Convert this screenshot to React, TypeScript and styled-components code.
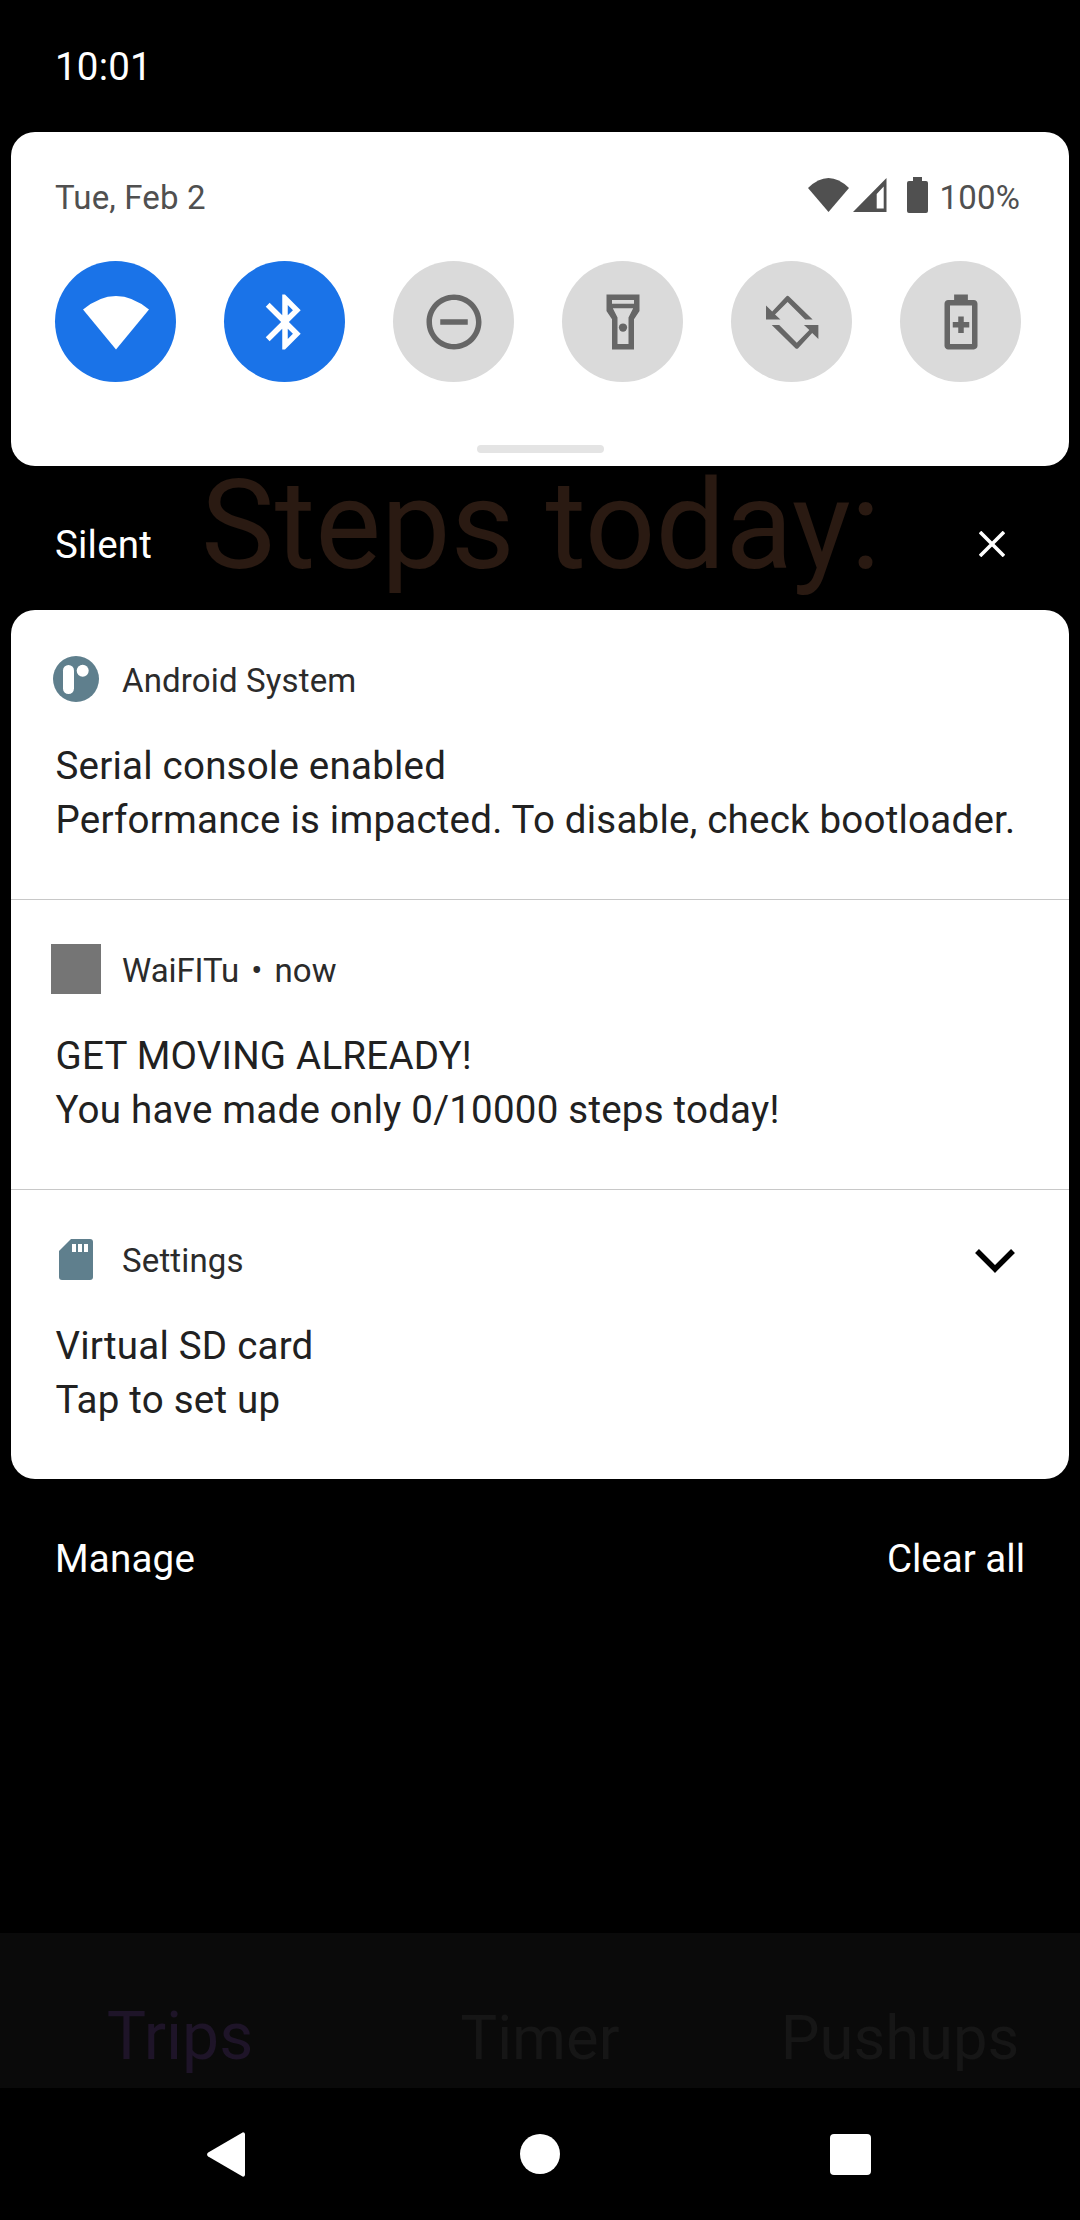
import React from "react";
import styled, { createGlobalStyle } from "styled-components";

const Global = createGlobalStyle`
  html, body { margin: 0; padding: 0; background: #000; }
  body { font-family: Roboto, "Liberation Sans", sans-serif; }
`;

const Screen = styled.div`
  width: 1080px;
  height: 2220px;
  background: #000;
  display: flex;
  flex-direction: column;
  overflow: hidden;
`;

const StatusBar = styled.div`
  height: 132px;
  box-sizing: border-box;
  padding: 40px 0 0 55px;
  font-size: 38.5px;
  letter-spacing: 0.2px;
  line-height: 54px;
  color: #fff;
`;

const QuickPanel = styled.section`
  height: 334px;
  margin: 0 11px;
  background: #fff;
  border-radius: 24px;
  box-sizing: border-box;
  padding: 0 44px;
  display: flex;
  flex-direction: column;
`;

const QuickHeader = styled.div`
  height: 129px;
  box-sizing: border-box;
  padding-top: 43px;
  display: flex;
  justify-content: space-between;
  align-items: flex-start;
  font-size: 33px;
  letter-spacing: 0.15px;
  line-height: 46px;
  color: #505050;
`;

const StatusIcons = styled.div`
  display: flex;
  align-items: flex-start;
  margin-top: 2px;
  margin-right: 5px;
`;

const StatusGlyph = styled.svg<{ $left: number; $top: number }>`
  display: block;
  margin: ${(p) => p.$top}px 0 0 ${(p) => p.$left}px;
  fill: #505050;
`;

const Percent = styled.span`
  margin: -2px 0 0 12px;
`;

const TileRow = styled.div`
  display: flex;
  gap: 48px;
`;

const Tile = styled.div<{ $on?: boolean }>`
  width: 121px;
  height: 121px;
  border-radius: 50%;
  background: ${(p) => (p.$on ? "#1a73e8" : "#dadada")};
  color: ${(p) => (p.$on ? "#fff" : "#666")};
  display: flex;
  align-items: center;
  justify-content: center;
`;

const TileGlyph = styled.svg`
  width: 66px;
  height: 66px;
  fill: currentColor;
  display: block;
`;

const Handle = styled.div`
  width: 127px;
  height: 8px;
  border-radius: 4px;
  background: #e4e4e4;
  margin: 63px auto 0;
`;

const SilentRow = styled.div`
  height: 144px;
  box-sizing: border-box;
  padding: 12px 75px 0 55px;
  display: flex;
  align-items: center;
  font-size: 38.5px;
  letter-spacing: 0.2px;
  color: #fff;
`;

const Ghost = styled.span`
  font-size: 124px;
  letter-spacing: 0;
  line-height: 144px;
  height: 144px;
  color: #2a1a12;
  margin: -36px 0 0 49px;
  white-space: nowrap;
`;

const CloseIcon = styled.svg`
  width: 26px;
  height: 26px;
  margin-left: auto;
  stroke: #fff;
  stroke-width: 3.6;
  fill: none;
  display: block;
`;

const Card = styled.section`
  margin: 0 11px;
  background: #fff;
  border-radius: 24px;
  overflow: hidden;
`;

const Notification = styled.article`
  height: 289px;
  box-sizing: border-box;
  padding-top: 46px;
  position: relative;
  & + & {
    height: 290px;
    border-top: 1px solid #c8c8c8;
  }
`;

const NotifHeader = styled.header`
  height: 46px;
  display: flex;
  align-items: center;
  font-size: 33px;
  letter-spacing: 0.15px;
  color: #2b2b2b;
`;

const AppIconSlot = styled.div`
  width: 130px;
  margin-right: -19px;
  flex: none;
  display: flex;
  justify-content: center;
`;

const HeaderText = styled.span`
  padding-top: 4px;
  line-height: 46px;
  white-space: nowrap;
`;

const AppName = styled.span`
  letter-spacing: -0.1px;
`;

const Dot = styled.span`
  margin-left: 12px;
`;

const Chevron = styled.svg`
  position: absolute;
  left: 964px;
  top: 59px;
  width: 40px;
  height: 24px;
  fill: none;
  stroke: #000;
  stroke-width: 5.5;
`;

const GrayIcon = styled.div`
  width: 50px;
  height: 50px;
  background: #757575;
  flex: none;
`;

const NotifText = styled.div`
  margin: 37px 0 0 44.5px;
  font-size: 38.5px;
  letter-spacing: 0.22px;
  line-height: 54px;
  color: #212121;
  white-space: nowrap;
`;

const Footer = styled.div`
  height: 118px;
  box-sizing: border-box;
  padding: 53px 55px 0 55px;
  display: flex;
  justify-content: space-between;
  font-size: 38.5px;
  letter-spacing: 0.2px;
  line-height: 54px;
  color: #fff;
`;

const ClearAll = styled.span`
  letter-spacing: 0;
`;

const Spacer = styled.div`
  flex: 1;
`;

const TabBar = styled.nav`
  height: 155px;
  box-sizing: border-box;
  padding-top: 54px;
  background: #0a0a0a;
  display: grid;
  grid-template-columns: repeat(3, 1fr);
  align-items: baseline;
`;

const Tab = styled.div<{ $on?: boolean }>`
  text-align: center;
  font-size: ${(p) => (p.$on ? "66px" : "61.5px")};
  line-height: 100px;
  color: ${(p) => (p.$on ? "#1e1428" : "#161616")};
`;

const NavBar = styled.div`
  height: 132px;
  display: flex;
  align-items: center;
  padding-left: 207px;
`;

const NavGlyph = styled.svg<{ $gap: number }>`
  display: block;
  margin-left: ${(p) => p.$gap}px;
  fill: #fff;
`;

const rotateArrow =
  "M2.55 6V11.1H7.8L5.83 9.28 10.4 4.7 16.8 11.1H19.5L10.9 2.7a.7.7 0 0 0-1 0L4.8 8.2Z";

export default function App() {
  return (
    <Screen>
      <Global />
      <StatusBar>10:01</StatusBar>

      <QuickPanel>
        <QuickHeader>
          <span>Tue, Feb 2</span>
          <StatusIcons>
            <StatusGlyph $left={0} $top={1} width={41} height={34} viewBox="0 0 41 34">
              <path d="M0 10 Q20.5 -10 41 10 L20.5 34 Z" />
            </StatusGlyph>
            <StatusGlyph $left={4} $top={1} width={34} height={34} viewBox="0 0 34 34" fillRule="evenodd">
              <path d="M33.5 0 V34 H0 Z M30.7 8.5 L23.7 16 V30.5 H30.7 Z" />
            </StatusGlyph>
            <StatusGlyph $left={20} $top={0} width={21} height={36} viewBox="0 0 21 36">
              <path d="M6 0 H15 V4 H19 a2 2 0 0 1 2 2 V34 a2 2 0 0 1 -2 2 H2 a2 2 0 0 1 -2 -2 V6 a2 2 0 0 1 2 -2 H6 Z" />
            </StatusGlyph>
            <Percent>100%</Percent>
          </StatusIcons>
        </QuickHeader>
        <TileRow>
          <Tile $on>
            <TileGlyph viewBox="0 0 24 24">
              <path d="M0 7.45 Q12 -2.4 24 7.45 L12 22 Z" />
            </TileGlyph>
          </Tile>
          <Tile $on>
            <TileGlyph viewBox="0 0 24 24">
              <path d="M17.71 7.71L12 2h-1v7.59L6.41 5 5 6.41 10.59 12 5 17.59 6.41 19 11 14.41V22h1l5.71-5.71-4.3-4.29 4.3-4.29zM13 5.83l1.88 1.88L13 9.59V5.83zm1.88 10.46L13 18.17v-3.76l1.88 1.88z" />
            </TileGlyph>
          </Tile>
          <Tile>
            <TileGlyph viewBox="0 0 24 24">
              <path d="M12 2C6.48 2 2 6.48 2 12s4.48 10 10 10 10-4.48 10-10S17.52 2 12 2zm0 18c-4.41 0-8-3.59-8-8s3.59-8 8-8 8 3.59 8 8-3.59 8-8 8zM7 11h10v2H7z" />
            </TileGlyph>
          </Tile>
          <Tile>
            <TileGlyph viewBox="0 0 24 24" fillRule="evenodd">
              <path d="M6 2v6l2 3v11h8V11l2-3V2H6zM16 4v1.4H8V4h8zM14 10.4V20h-4v-9.6L8.3 7h7.4L14 10.4z" />
              <circle cx="12" cy="14" r="1.5" />
            </TileGlyph>
          </Tile>
          <Tile>
            <TileGlyph viewBox="0 0 24 24">
              <path d={rotateArrow} />
              <path d={rotateArrow} transform="rotate(180 12.07 12.1)" />
            </TileGlyph>
          </Tile>
          <Tile>
            <TileGlyph viewBox="0 0 24 24">
              <path d="M16.67 4H14.5V2h-5v2H7.33C6.6 4 6 4.6 6 5.33v15.33C6 21.4 6.6 22 7.33 22h9.33c.74 0 1.34-.6 1.34-1.33V5.33C18 4.6 17.4 4 16.67 4zM16 20H8V6h8v14zM11 16h2v-2h2v-2h-2v-2h-2v2H9v2h2v2z" />
            </TileGlyph>
          </Tile>
        </TileRow>
        <Handle />
      </QuickPanel>

      <SilentRow>
        <span>Silent</span>
        <Ghost>Steps today:</Ghost>
        <CloseIcon viewBox="0 0 26 26">
          <path d="M1 1 L25 25 M25 1 L1 25" />
        </CloseIcon>
      </SilentRow>

      <Card>
        <Notification>
          <NotifHeader>
            <AppIconSlot>
              <svg width="46" height="46" viewBox="0 0 46 46">
                <circle cx="23" cy="23" r="23" fill="#5f7f8d" />
                <rect x="10" y="9" width="11" height="29" rx="5.5" fill="#fff" />
                <circle cx="29.7" cy="14.7" r="6" fill="#fff" />
              </svg>
            </AppIconSlot>
            <HeaderText>Android System</HeaderText>
          </NotifHeader>
          <NotifText>
            Serial console enabled
            <br />
            Performance is impacted. To disable, check bootloader.
          </NotifText>
        </Notification>
        <Notification>
          <NotifHeader>
            <AppIconSlot>
              <GrayIcon />
            </AppIconSlot>
            <HeaderText>
              <AppName>WaiFITu</AppName>
              <Dot>•</Dot>
              <Dot>now</Dot>
            </HeaderText>
          </NotifHeader>
          <NotifText>
            GET MOVING ALREADY!
            <br />
            You have made only 0/10000 steps today!
          </NotifText>
        </Notification>
        <Notification>
          <NotifHeader>
            <AppIconSlot>
              <svg width="34" height="41" viewBox="0 0 34 41">
                <path d="M12 0H31a3 3 0 0 1 3 3V38a3 3 0 0 1-3 3H3a3 3 0 0 1-3-3V12Z" fill="#5f7f8d" />
                <rect x="13" y="5" width="4" height="8" fill="#fff" />
                <rect x="19" y="5" width="4" height="8" fill="#fff" />
                <rect x="25" y="5" width="4" height="8" fill="#fff" />
              </svg>
            </AppIconSlot>
            <HeaderText>Settings</HeaderText>
          </NotifHeader>
          <Chevron viewBox="0 0 40 24">
            <path d="M2 2 L20 20 L38 2" />
          </Chevron>
          <NotifText>
            Virtual SD card
            <br />
            Tap to set up
          </NotifText>
        </Notification>
      </Card>

      <Footer>
        <span>Manage</span>
        <ClearAll>Clear all</ClearAll>
      </Footer>

      <Spacer />

      <TabBar>
        <Tab $on>Trips</Tab>
        <Tab>Timer</Tab>
        <Tab>Pushups</Tab>
      </TabBar>

      <NavBar>
        <NavGlyph $gap={0} width={38} height={45} viewBox="0 0 38 45">
          <path d="M36 0.3 a2 2 0 0 1 2 1.7 V43 a2 2 0 0 1 -2 1.7 L1.2 24.5 a2.4 2.4 0 0 1 0 -4 Z" />
        </NavGlyph>
        <NavGlyph $gap={275} width={40} height={40} viewBox="0 0 40 40">
          <circle cx="20" cy="20" r="20" />
        </NavGlyph>
        <NavGlyph $gap={270} width={41} height={41} viewBox="0 0 41 41">
          <rect width="41" height="41" rx="4" />
        </NavGlyph>
      </NavBar>
    </Screen>
  );
}
